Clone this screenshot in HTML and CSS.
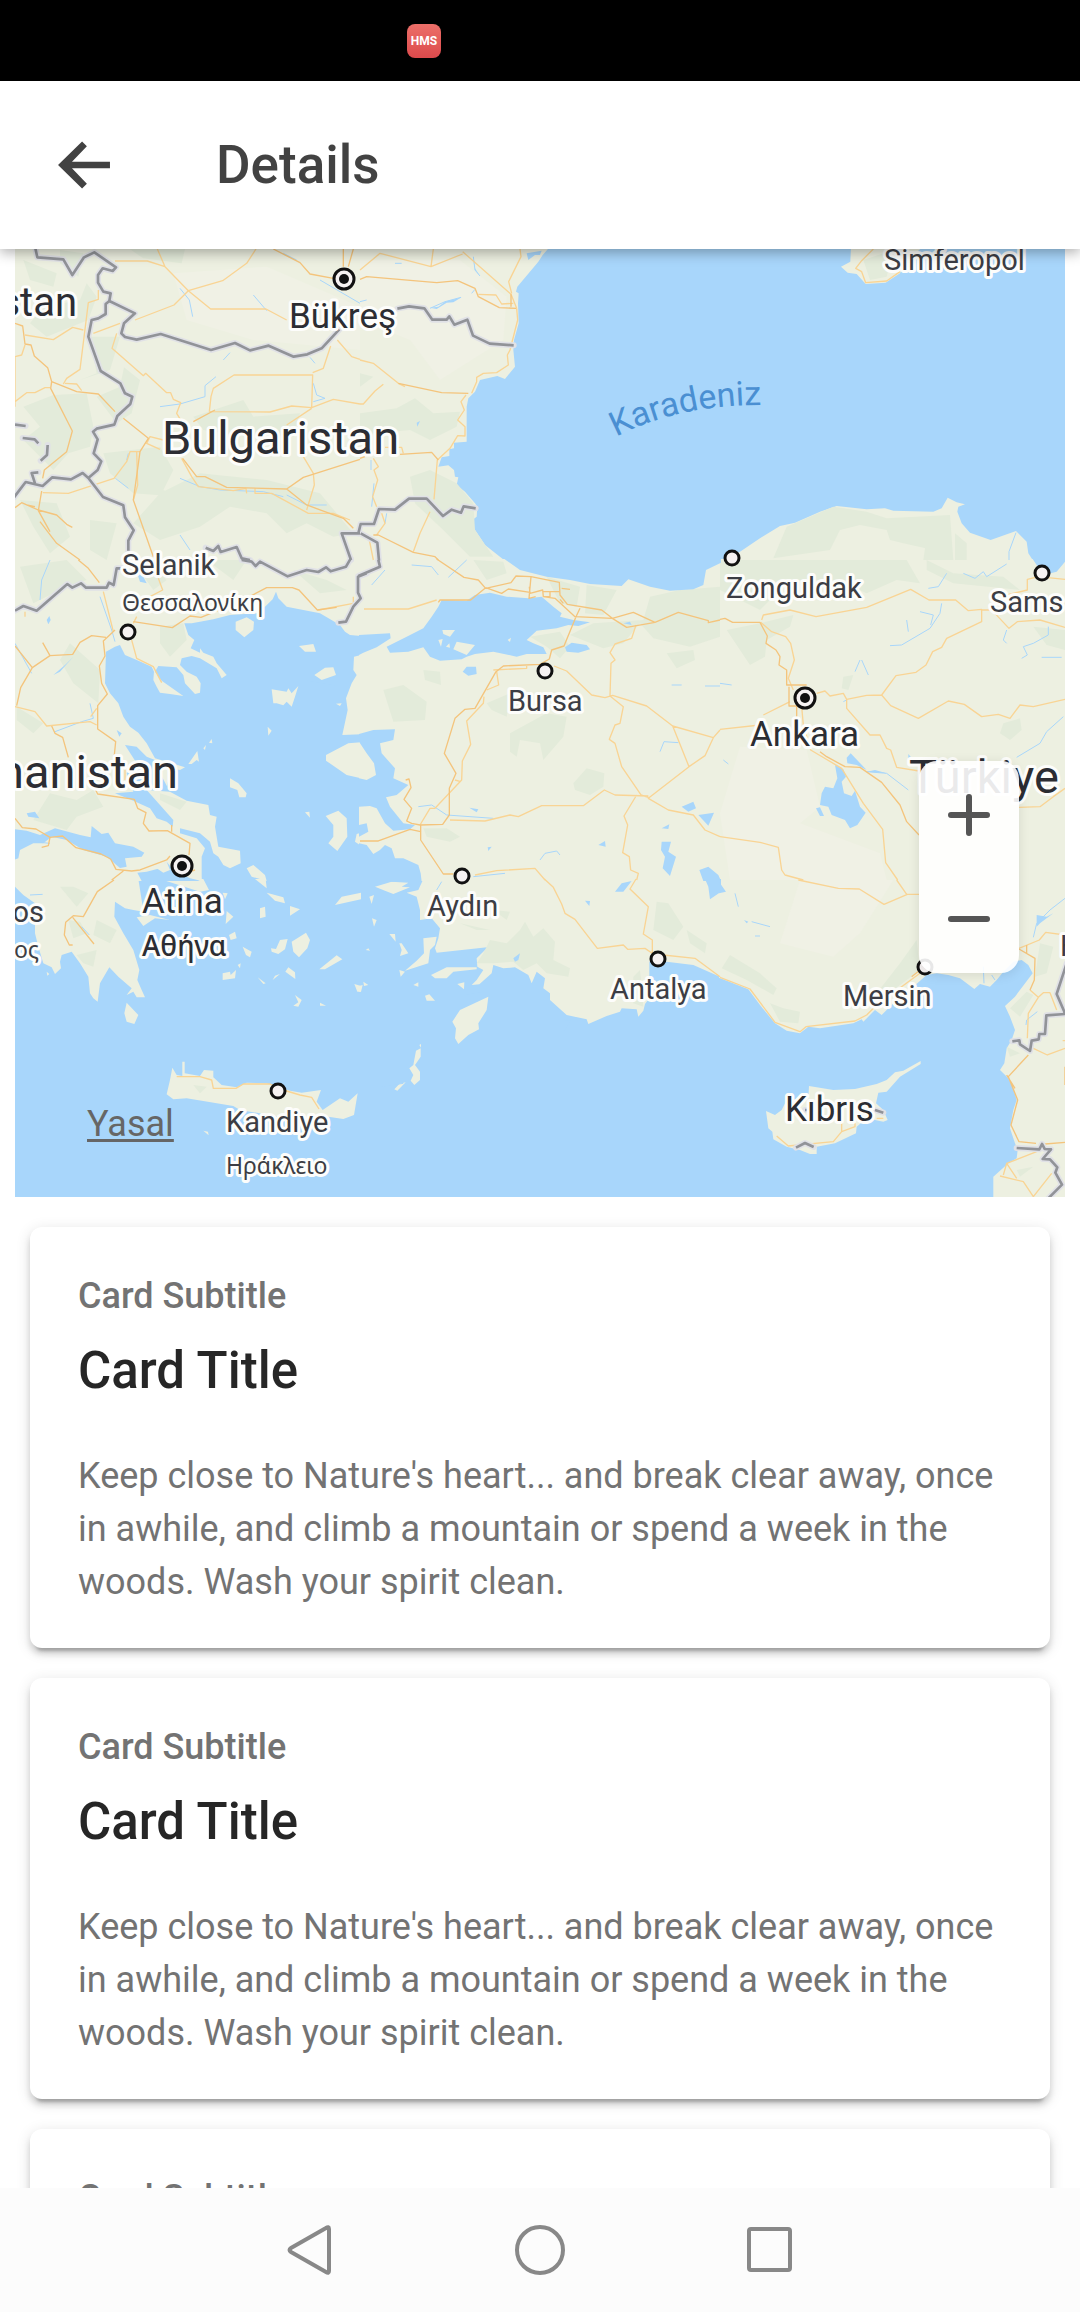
FILE: index.html
```html
<!DOCTYPE html>
<html lang="en">
<head>
<meta charset="utf-8">
<meta name="viewport" content="width=device-width, initial-scale=1">
<title>Details</title>
<link rel="stylesheet" href="styles.css">
</head>
<body>
<div class="screen">
  <div class="status-bar"><span class="status-app">HMS</span></div>

  <header class="toolbar">
    <button class="back-button" type="button" aria-label="Back">
      <svg class="back-icon" viewBox="0 0 54 52"><path d="M54 22.500H14.500L30 6.500 25 1.500 0 26 25 50.500 30 45.500 14.500 29.500H54Z" fill="currentColor"/></svg>
    </button>
    <h1 class="toolbar-title">Details</h1>
  </header>

  <main class="content">
    <section class="map" aria-label="Map">
      <svg class="map-canvas" viewBox="15 249 1050 948" preserveAspectRatio="xMidYMid slice">
        <defs>
          <g id="borders">
            <g transform="translate(0 240) scale(.33333)">
              <path d="M105 20L112 52 190 58 217 105 252 52 283 37 348 82 338 93 308 85 294 105V128L310 155 332 160 328 183 405 220 372 250 364 280 375 291 410 299 482 282 633 330 705 309 750 331 806 317 881 350 922 343 965 325 1018 268"/>
              <path d="M328 183L317 192V222L295 235 275 240 265 290 302 393 361 430 375 460 397 470 391 492 352 528 343 554 290 566 279 575 293 598 281 640 304 664 293 690 265 714 248 699 213 718 157 712 128 738 77 726 42 772M265 714L309 771 370 796 375 832 401 871 385 902V932M45 554L77 558M68 594L104 598 115 610M143 615L141 645 122 662M115 697L95 699 105 730M617 923L640 933 655 918 662 936 710 921 725 955 750 960M1080 880H1025L1053 960"/>
            </g>
            <g transform="translate(360 240) scale(.33333)">
              <path d="M112 206L147 199 193 205 217 239H260L268 229 283 254 322 239 339 287 389 311 461 316M-5 880L2 852H42L57 807 105 809 147 776H200L249 828 275 809 303 818 311 799 347 805M2 880L52 908 57 962"/>
            </g>
            <g transform="translate(0 560) scale(.33333)">
              <path d="M45 152L70 138 110 152 202 72 217 83 243 70 258 83H320L327 68 341 75 350 25H365M725 0L755 5 767 18 780 5 863 49 920 30 955 36 978 22 992 34 1038 20 1052 -4M1100 40L1074 50V98L1082 115 1060 140 1038 185 1015 188M1135 0L1140 20 1075 48"/>
            </g>
            <g transform="translate(720 880) scale(.33333)">
              <path d="M1040 250L1010 342 1036 402 979 406 975 462H958L956 478 935 482 930 513 900 493 898 481 877 484M890 804L958 808 966 792 974 807 993 808 968 837 990 838 1012 862 1006 878 1026 914 985 955M228 803L255 789 281 801M465 690L490 698M255 690L262 690"/>
            </g>
          </g>
          <path id="sea-name" d="M616 437Q680 404 765 405"/>
        </defs>

        <rect class="water" x="15" y="249" width="1050" height="948"/>

        <g class="land">
          <path transform="translate(0 240) scale(.33333)" d="M40 20H1083V963H40Z"/>
          <path transform="translate(360 240) scale(.33333)" d="M-3 20H570L548 45 535 65 472 140 468 155 476 160 474 190 476 250 462 300 460 330 465 380 435 417 412 408 360 420 345 455 325 475 320 500V605L282 608V625L268 628V648L245 652 235 680 265 676 282 690 285 710 295 712 290 735 315 755 345 790 352 800 350 830 337 840 342 865 375 915 435 962H-3Z"/>
          <path transform="translate(720 240) scale(.33333)" d="M393 20L391 65 363 80 383 98 410 102 437 132 497 128 540 100 560 60 610 20ZM-10 965L60 935 120 895 180 858 225 848 300 815 350 798 440 808 495 805 520 812 640 815 665 805 683 773 710 787 735 793 715 800 712 815 725 850 750 878 812 900 888 873 920 905 925 940 940 963Z"/>
          <path transform="translate(0 560) scale(.33333)" d="M40 -3H1083V228L1050 225 1035 215 1020 195 960 160 860 140 835 115 828 95 818 118 795 140 770 160 690 165 640 178 600 185 575 190 553 190 565 225 583 240 572 265 600 278V265L610 278 640 290 650 310 680 345 665 355 650 325 625 310 600 295 575 288 545 295 540 315 560 335 590 350 602 370 600 398 585 402 555 370 550 345 530 322 475 318 465 335 485 362 550 408 510 402 480 398 470 380 460 360 462 335 455 320 410 300 375 285 360 255 345 260 318 275 315 370 330 400 355 430 370 470 390 500 415 518 440 550 465 595 500 605 555 622 540 630 510 625 500 690 560 722 625 735 630 765 650 770 645 800 655 860 720 872 722 910 690 925 670 915 655 890 640 880 630 845 600 820 540 805V820L590 835 615 865 605 890V963H40ZM707 185L740 172 762 185 760 210 733 232 707 210ZM897 258L940 252 948 275 915 275ZM943 345L975 323 1000 322 1008 345 965 360ZM815 388L860 395 865 385 875 400 895 378 885 410 875 440 860 425 850 436 830 430 820 430ZM803 500L815 512 805 527ZM565 612L592 573 597 605 590 600 575 612ZM690 655L715 670 740 700 737 712 718 712 712 690 690 682ZM610 565L618 555 615 570ZM627 548L635 537 637 550ZM915 757L928 755 930 773ZM977 768L1015 752 1040 775 1042 830 1012 873 985 850 1000 830V795ZM740 925L760 915 795 945 800 963 755 950ZM1083 285L1062 290 1060 330 1070 345 1055 370 1038 415 1043 450 1027 525 1083 523ZM1083 547L1045 550 978 585V602L1040 645 1083 655ZM1083 818L1070 822 1065 845 1083 857ZM1008 431L1025 430 1020 438Z"/>
          <path transform="translate(360 560) scale(.33333)" d="M-3 -3H1083V963H-3Z"/>
          <path transform="translate(720 560) scale(.33333)" d="M-3 -3H1040V963H-3Z"/>
          <path transform="translate(0 880) scale(.33333)" d="M40 -3H415L425 60 430 95 400 90 375 85 345 65 343 110 370 160 400 210 418 270 412 300 425 330 435 352 410 352 400 335 380 345 395 325 355 290 328 262 300 310 293 365 280 355 270 340 265 290 240 250 215 215 185 225 180 245 183 265 165 282 155 262 130 250 115 200 105 160V70L70 45 45 20ZM480 -3H610L627 30 600 35ZM410 112L450 105 510 120 465 115 430 138ZM380 368L415 405 403 432 380 425 373 400ZM517 563L530 585 547 588V545H554V580L600 588 612 570 640 572 640 592 665 615 710 622 740 608 800 610 870 632 905 638 963 630 950 665 968 690 1020 655 1045 665 1073 640 1062 705 1030 717 985 710 850 712 720 690 700 678 560 655 520 658 500 643 510 600ZM765 -3H797L800 25ZM800 38L850 52 855 70 825 62ZM1005 75L1025 50 1083 38V58ZM780 85L795 80 797 110 780 115ZM870 78L900 88 870 107ZM668 38L683 40 675 58ZM680 93L700 110 677 132ZM687 165L705 155 710 175 692 180ZM728 200L755 215 750 232 738 225ZM813 205L828 207 840 180 863 177 855 208 835 222 815 215ZM875 185L918 158 930 180 922 205 897 232 880 215ZM958 268L1010 226 1027 238 975 268ZM668 280L690 275 692 285 708 270 705 295 668 300ZM713 255L722 250 720 265ZM773 292L797 310 790 312ZM818 300L825 287 840 282ZM856 275L865 262 885 277 886 297ZM885 345L905 360 895 380 880 377 895 367ZM960 368L978 377 960 377ZM1063 312L1083 318V335H1072ZM610 752L624 755 626 766ZM140 275L148 282 142 287Z"/>
          <path transform="translate(360 880) scale(.33333)" d="M190 -3L175 30 140 38 170 50 180 90V120L215 115 240 145 235 175 225 205 230 218 395 200 375 210 350 235 352 260 370 270 350 300 335 315 358 313 395 280 400 255 430 265 465 262 505 285 515 310 530 275 555 295 550 325 570 340V360L620 405 680 418 685 432 740 408 780 395 785 385 830 388 835 410 850 392 855 372 868 355V245L920 245 1000 255 1083 292V-3ZM45 20L95 5 145 8 125 20 150 22 100 42 75 32ZM28 50L42 45 35 72ZM36 115L50 120 42 140ZM88 162L105 162 107 185ZM118 190L125 190 145 220 120 228 125 210ZM190 175L230 170 225 195 210 210 205 250 135 272 170 242 192 220ZM213 285L260 262 350 262V268L280 275 260 295 225 295ZM118 270L135 275 122 290ZM160 315L175 307V320ZM292 312L313 307 312 328ZM195 347L208 343 225 362 200 362ZM277 425L300 390 385 350 380 390 355 430 357 448 325 465 295 492 285 475 288 445ZM168 512L182 505V530L165 555 180 575V600L163 615 152 602 160 585 148 565 160 555ZM103 628L118 612 137 607 112 632ZM178 495L183 492V503ZM-3 318L8 315 3 335H-3ZM10 305L25 315 12 318ZM17 210L25 205 30 212Z"/>
          <path transform="translate(720 880) scale(.33333)" d="M-3 -3H1040V955H820V890L865 850 890 835 893 810 885 790 870 745 880 690 890 660 880 625 865 595 840 570 853 550 860 505 875 480 885 450 870 410 855 378 885 350 938 280 925 255 905 240 880 245 850 275 830 300 810 320 780 312 763 327 720 295 685 285 650 280 620 285 580 320 520 370 485 405 465 390 430 425 425 418 400 430 300 445 265 440 240 460 200 452 165 430 120 375 85 328 -3 293ZM267 618L340 630 405 627 470 612 500 600 525 577 550 572 602 543V552L540 590 500 635 475 638 468 670 490 690 503 720 490 725 440 715 410 740 408 760 345 790 290 800 290 822H270L240 810 200 800 160 778 157 755 145 745 138 693 165 705 185 690 200 660 265 655Z"/>
        </g>

        <g class="farmland">
          <path transform="translate(0 240) scale(.33333)" d="M520 100L800 80 1080 200V330L760 300 560 240Z"/>
          <path transform="translate(360 240) scale(.33333)" d="M0 60L300 60 440 170 430 300 240 420 150 300 0 240Z"/>
          <path transform="translate(720 560) scale(.33333)" d="M60 560L260 570 300 740 240 790 480 880 500 960H30L0 760Z"/>
          <path transform="translate(720 880) scale(.33333)" d="M240 0H520L420 160 340 230 180 190Z"/>
        </g>

        <g class="wood">
          <path transform="translate(0 240) scale(.33333)" d="M180 30L250 40 235 110 180 70ZM390 28H555L545 70 430 55ZM70 60L170 100 160 140 90 120ZM260 130L290 170 265 240 140 290 90 250 130 200 240 180ZM270 290L360 290 330 390 240 420 290 400ZM372 382L420 420 395 520 350 550 290 470 360 440ZM160 465L260 460 280 560 270 620 205 640 160 690 70 600 120 560 70 500ZM310 640L480 620 520 690 490 750 540 770 400 760 330 700ZM580 530L730 480 760 530 900 520 880 590 740 590 610 570ZM600 700L800 720 960 760 1060 880 1000 890 920 850 860 880 800 820 690 800 600 860 480 900 400 850 480 760ZM60 780L170 790 210 890 150 940 100 860ZM270 840L350 850 320 960 270 930Z"/>
          <path transform="translate(360 240) scale(.33333)" d="M0 520L110 505 165 475 220 520 300 515 290 560 210 600 150 570 0 585ZM150 710L210 690 290 730 340 790 345 870 400 950H330L250 870 165 790ZM0 400L40 410 0 440Z"/>
          <path transform="translate(720 240) scale(.33333)" d="M200 860L340 800 440 815 500 835 690 825 700 960H610L620 890 660 870 640 930 550 910 510 900 500 870 420 855 360 870 330 930 160 955ZM430 60L520 30 500 110 450 120ZM705 880L740 910V960H705Z"/>
          <path transform="translate(0 560) scale(.33333)" d="M60 20L200 0 260 60 190 85 100 130ZM410 20L440 0 500 60 460 90ZM620 0H740L700 60ZM480 200L550 190 560 240 510 290 480 250ZM210 250L300 330 295 430 220 370 180 300ZM50 440L130 490 100 520 50 480ZM150 700L230 720 280 690 310 740 230 770 200 810 100 780ZM480 700L560 725 540 750 480 720ZM880 30L980 60 1040 90 960 100Z"/>
          <path transform="translate(360 560) scale(.33333)" d="M340 0L430 5 440 40 380 60ZM560 50L660 80 650 140 600 130ZM680 75L770 90 730 165 675 160ZM870 110L960 90 1080 80V230L990 260 880 235 840 190 790 250 730 265 630 225 700 190 850 180ZM510 230L600 215 630 260 600 295 560 260ZM920 280L1000 270 1005 300 950 325ZM190 330L240 335 243 375 195 360ZM70 390L130 375 200 425 195 480 100 485ZM380 430L450 400 440 470 395 450ZM450 520L560 460 620 470 610 530 550 600 540 550 480 540 470 590 450 575ZM640 670L680 625 733 640 730 680 690 705 645 690ZM190 805L260 805 300 830 270 845 200 830Z"/>
          <path transform="translate(720 560) scale(.33333)" d="M0 0H560L600 70 530 60 440 100 350 60 210 60 120 150 0 90ZM20 210L120 190 220 165 210 200 140 240 135 290 90 315ZM620 0L700 40 850 50 900 90 700 70 620 30ZM940 200L1035 210V270L980 255ZM850 490L900 475 905 510 870 540 840 520ZM370 350L400 345 385 390 365 385Z"/>
          <path transform="translate(0 880) scale(.33333)" d="M180 20L220 20 265 40 230 80ZM205 120L240 125 260 160 220 175ZM290 120L350 150 330 190 280 165ZM230 225L290 210 280 260 250 250ZM580 615L620 620 600 640Z"/>
          <path transform="translate(360 880) scale(.33333)" d="M400 90L450 95 440 120ZM300 130L390 150 350 150ZM350 250L370 220 390 180 440 190 480 150 495 125 520 170 550 145 585 185 580 240 630 265 625 290 560 280 530 250 490 270 460 245 400 250ZM890 65L925 70 970 140 940 180 880 150ZM820 290L840 270 850 380 820 370ZM980 150L1040 190 1035 220 990 190Z"/>
          <path transform="translate(720 880) scale(.33333)" d="M30 225L120 280 170 325 160 345 80 300 5 265ZM150 370L190 385 240 395 235 430 180 425ZM590 180L600 270 520 330 470 340 540 250ZM960 190L1000 200 980 280 945 290ZM870 385L920 335 940 345 900 410ZM860 500L900 520 870 530ZM890 870L940 860 900 890Z"/>
        </g>

        <g class="water">
          <path transform="translate(360 240) scale(.33333)" d="M500 40L545 32 540 45 525 45 505 60ZM340 60L345 85 360 108 345 90ZM210 203L235 200 255 185 305 172 280 187 260 188 230 207ZM170 548L180 543 172 560Z"/>
          <path transform="translate(0 560) scale(.33333)" d="M410 35L430 50 440 70 420 65ZM45 808L80 812 120 825 165 805 240 825 272 832 275 798 305 822 325 818 345 850 400 860 433 878 425 890 375 895 380 920 360 924 320 890 250 870 200 840 155 830 130 850 100 850 60 870 55 895 40 900V808ZM375 555L410 560 440 590 465 600 480 640 510 695 440 690 520 780 518 800 500 785 470 775 450 745 400 722 345 700 400 695 380 640 410 610ZM412 938L440 935 480 925 500 905 520 930 560 940 600 963H425ZM80 760L105 755 118 775 85 770ZM350 510L365 520 358 530ZM140 180L148 168 152 180 145 193ZM160 345L195 315 220 290 180 335Z"/>
          <path transform="translate(360 560) scale(.33333)" d="M430 -5L480 30 560 50 630 60 690 72 785 78 805 58 870 80 930 92 1000 88 1030 75 1038 30 1083 8V-5ZM235 140L245 120 320 122 345 105 390 98 440 110 505 115 545 110 580 140 605 160 600 170 640 180 690 187 655 198 625 195 590 205 530 212 500 240 520 250 550 262 560 282 500 282 470 290 400 275 345 282 320 290 305 298 240 302 210 290 190 262 145 275 90 278 80 260 140 230 190 205 215 170ZM-3 225L90 220 92 235 50 262 10 278-3 285ZM615 262L635 248 680 255 690 268 655 278 620 275ZM308 335L320 320 348 320 350 342 325 347ZM-3 522L40 510 105 508 100 540 60 550 65 580 105 625 100 655 145 675 110 705 78 712 90 740 130 790 165 795 150 808 100 812 75 790 50 745 30 738-3 740V655L20 660 48 645 42 610 20 580-3 545ZM-3 850L20 855 40 882 60 870 75 855 95 865 105 895 130 895 175 915 182 940 185 965H-3ZM965 740L1000 725 1008 745 985 755ZM1015 765L1062 758 1045 797ZM905 845L933 845 925 875 948 890 930 948 908 925 915 890 903 870ZM1018 930L1045 920 1075 945 1083 963H1030ZM715 855L735 843 737 860ZM328 743L355 748 350 757ZM383 862L395 860 385 873ZM905 805L928 793 925 807ZM790 190L810 185 815 195ZM-3 795L20 790 25 815-3 830Z"/>
          <path transform="translate(720 560) scale(.33333)" d="M938 -3H1035V5L1010 35 970 45 950 15ZM345 615L370 628 378 650 365 665 372 700 395 708 405 692 420 740 437 758 412 795 390 805 375 780 335 765 325 740 300 735 305 700 315 680 340 685 352 655ZM380 593L392 580 440 630 410 615 382 610ZM288 745L300 742 312 768 300 768ZM565 582L580 600 565 600ZM500 640L465 630 440 635Z"/>
          <path transform="translate(360 880) scale(.33333)" d="M765 35L785 10 815 3 790 35ZM1035 -3H1083V35L1050 58 1045 20ZM675 62L690 63 688 78ZM460 235L480 220 475 240 465 245Z"/>
          <path transform="translate(720 880) scale(.33333)" d="M-3 5L18 35-3 40ZM950 105L980 110 1000 100 960 130 950 140ZM72 120L85 125 80 130Z"/>
        </g>
        <g class="land">
          <path transform="translate(360 560) scale(.33333)" d="M247 210L285 210 270 230 250 222ZM290 245L345 255 320 285 280 268ZM235 240L248 237 243 260ZM258 260L268 250 270 263ZM443 240L453 233 450 246Z"/>
          <path transform="translate(0 560) scale(.33333)" d="M470 925L500 905 510 930 490 938ZM530 935L545 950 600 925 605 963 570 955Z"/>
        </g>

        <g class="river">
          <path transform="translate(0 240) scale(.33333)" d="M648 410L615 437V470L540 492 480 500M540 145L568 180 578 230M760 165L800 212M670 360L690 338M940 430L950 465 975 475 940 485M540 885L570 930M540 715L600 740 660 750 790 755 850 770M860 765L920 795 980 795M850 40L890 60M960 120L1080 190M346 715L385 745M930 352L945 370M380 660L385 640"/>
          <path transform="translate(360 240) scale(.33333)" d="M340 50L345 90 360 108M210 205L255 185 303 172M33 660V690M42 730L35 800M0 185L20 180M80 820L75 850M105 70H125M335 160L345 148"/>
          <path transform="translate(720 240) scale(.33333)" d="M888 878L867 935V960"/>
          <path transform="translate(0 560) scale(.33333)" d="M300 110L335 210 345 245M270 430L280 475 245 485 165 515M150 0L125 60 120 120M45 250L95 340M920 362L1005 376M45 840L150 850"/>
          <path transform="translate(360 560) scale(.33333)" d="M155 15L215 20 235 45M75 30L35 75M320 0L265 52M540 900L555 880 590 873 600 885M900 575L912 545 955 548M340 950L435 940M935 375H965M1035 378H1080M175 740L215 735 260 765 330 770 400 775"/>
          <path transform="translate(720 560) scale(.33333)" d="M625 85L655 80 680 40M730 40L765 55 790 35 800 50 860 12M510 257L545 255 630 205 660 160 665 130M560 180L565 215M600 155L640 165 632 195M420 300L405 335M425 300L445 345M860 210L850 240 860 250M985 200V225L940 250 910 260 922 285 905 295M965 292H1025M1030 470L980 515 960 550 890 592M440 635L500 640 565 690M0 370L35 375M10 600L25 612M370 425L380 420"/>
          <path transform="translate(720 880) scale(.33333)" d="M940 172L950 130 990 90 1035 55M45 40L55 80M95 125L150 140M105 168H120M790 260L792 310M815 285L825 300M918 435L920 420 952 395"/>
          <path transform="translate(360 880) scale(.33333)" d="M230 30L245 5M610 458L633 420 615 420M55 622L130 610M315 345L370 335"/>
          <path transform="translate(0 880) scale(.33333)" d="M245 140L268 165M90 45L128 43"/>
        </g>

        <g class="road">
          <path transform="translate(0 240) scale(.33333)" d="M472 27L495 80 565 152 668 122 740 70 768 27M495 80L442 63H345M565 152L522 195 405 240M565 152L632 207H798L860 240M75 285L160 299 218 262 250 270M295 150V178L265 188 240 388 200 415 190 432M360 250L280 280M350 280L336 325 430 407 437 400 500 458H512L520 478 542 488 530 520 545 545M628 515L633 470 640 445 702 405H938L935 503M628 515L810 516 875 498 935 503 1000 478 1080 492M938 398L970 385 992 318M1012 300L1055 350 1080 358M935 505L860 555M490 600L450 590 440 610 480 628M45 485L80 458H105L135 443 150 443M45 500V350L65 345 75 315M420 635H390L380 665 342 715 205 760 128 758M545 655L575 710 595 740 700 752 738 745 740 760M765 745V760H815L925 820H1000L1050 840M910 650L940 700 943 735 920 810M1000 280L1030 250M195 430L230 432 245 452M410 635L413 735 400 780"/>
          <path transform="translate(360 240) scale(.33333)" d="M0 90L60 40 213 80 308 42M213 80L220 27M308 35L453 163 470 205M480 27L483 50 446 125 455 160M355 163L408 165 425 192 460 190M470 205L473 240 450 330 442 345 445 375 410 398 370 400 350 412V425L335 460M0 360L40 370 115 430 135 440M0 492H10L45 453 70 433M318 465L303 485 313 510 293 540 315 560V588L293 587 270 625 232 660 222 778M40 655L55 680 42 690 53 720 38 770 50 800M65 820L75 850 50 885M210 815L180 880 160 935M25 885L40 960M75 622H125L130 640"/>
          <path transform="translate(720 240) scale(.33333)" d="M460 27L425 62 407 85 425 95 437 128 500 123 540 95"/>
          <path transform="translate(0 560) scale(.33333)" d="M475 55L488 90 450 110M75 155V170M45 440L105 455 140 498 270 485 290 495M272 470L290 445M310 95L340 215M395 240L410 295 460 320 485 368M410 170L400 190M375 630V660M1060 110V130L955 150"/>
          <path transform="translate(360 560) scale(.33333)" d="M12 147H145L230 120M828 195L815 235 765 252 750 278 765 300 753 310 750 408 790 440 780 490 765 495 748 538 765 550 785 620 843 705 865 712M582 318L620 333 695 405 735 413 758 406 860 438 938 498 1060 533 1080 510M938 498L987 620 865 715 925 750 1000 765 1035 810 1080 830M987 620L1035 587 1060 533M865 708L765 705 733 690 670 737H545L475 770 450 765 375 783 270 780M830 705L792 768 803 795 788 878 808 890 812 930 835 940 830 960M410 335L416 375 380 390M372 410L370 430 320 483 332 553 307 603 305 660 225 745H210L180 795M345 945L410 932 525 925 555 960M285 660L302 665M400 330L500 325V318"/>
          <path transform="translate(720 560) scale(.33333)" d="M125 180L130 165 210 150 288 170 440 142 572 88 627 120H707L745 152 785 148V185L680 235 665 262 638 275 618 315 588 337 528 347 485 405 440 406 380 418V445L450 525H480L500 565 512 570 530 622 597 633M485 405L512 437 595 475 685 423 733 433 785 470 835 463 870 475 900 435 940 440 1035 418M380 418L370 400 330 408 315 393 290 400M122 187L155 215 197 230 212 250 223 300 205 355 220 390M820 155L867 205 892 185 960 180 1035 202M785 150H820M1035 58L955 50 922 58V90L860 105M210 425L130 465M120 495L0 508M245 440L250 495 272 570 365 625 430 730 488 808 497 908 533 960M0 830L120 847 175 862 185 930 195 945 250 960M897 742L960 740 1000 710 1035 685"/>
          <path transform="translate(360 880) scale(.33333)" d="M553 -3L580 22 605 72 615 100 645 118 712 205 790 195 803 208 855 205 880 222M828 -3L810 27 865 80 850 162 877 180V220M910 225L1005 235 1080 290"/>
          <path transform="translate(720 880) scale(.33333)" d="M235 0L355 25 418 27 492 73 562 43H597M530 0L560 43M0 292L90 327 165 427 240 455 258 440 405 423 440 405 470 375 600 280M897 205L958 180 977 157 1035 165M930 330L955 352 925 400 922 475M955 352L970 338H990L1010 390M1035 505L982 525 940 505M860 850L890 895M850 885L860 850 950 815M840 888L910 905 940 950 995 880M170 768L205 798 340 785 365 755 405 740V730M365 755V730M470 715H490M1035 482H1028"/>
          <path transform="translate(0 880) scale(.33333)" d="M530 590H600L635 600 640 625H708L730 612H810L850 630 900 645 935 652 957 687"/>
        </g>

        <g class="trunk">
          <path transform="translate(0 240) scale(.33333)" d="M820 27L900 68 930 102 1000 115M1030 27V80M1060 27L1045 80M45 250L68 258 75 312 93 315 103 348 143 383 155 425 230 455 295 462 345 515M155 425L152 445 217 573 200 635 133 690 128 715M370 535L445 595 420 635 400 780 460 950M548 655L590 710H615L680 742 860 747 910 712 1080 658M860 747L920 795 1030 835 1060 865M45 803L65 788 115 810 170 825 200 853 217 862M125 753L115 812 150 875M120 845L170 910 240 960M580 545L645 510M80 795L105 800"/>
          <path transform="translate(360 240) scale(.33333)" d="M0 118L20 110 230 128 293 122 345 145 355 170 418 203 468 205M453 163V200M115 430L245 458 325 460M120 643L215 637 235 660M0 655L15 650M40 885H55L160 937 225 950 235 960"/>
          <path transform="translate(0 560) scale(.33333)" d="M235 0L265 25 298 68M345 210L310 243 315 288 298 318 305 370 322 402 293 437V507L347 545 343 585M318 232L275 227 240 247 218 283 150 287 97 323 62 383 50 437M150 287L128 248M97 323L45 258M155 498L165 520 188 532 205 592M400 185L517 203 570 168 603 172 720 125 800 83H877L897 90 952 150 1010 142M287 690L293 702 403 718 413 745 438 758 430 790 447 813 502 812 570 850 567 885M515 795V815M45 775L67 803 108 807 150 832 188 828 228 863 303 882 332 897 348 928 395 933 420 930 500 900 510 888M370 933L335 960M150 832L145 857 125 862M550 940L585 930"/>
          <path transform="translate(360 560) scale(.33333)" d="M230 -3L312 52 355 60 377 85 453 68 468 48 513 50 598 67 600 105 622 133 725 150 757 175 800 202 885 187 820 157 757 175 645 170 585 115 550 110 548 90 510 100 508 80M513 50L507 115 527 110M377 83L332 120H240L235 127M377 83L425 100 445 87 510 97M605 85L630 88M550 95H600M660 145L648 170 612 258 575 270 568 297 540 313 430 318 408 335 345 445 315 448 285 475 253 580 288 640 268 685V765L248 793 180 795 155 790 140 783 155 745 132 718 153 683 147 657 137 660M885 187L955 157 1045 182V188L1080 180M0 843H55L150 808 182 815M182 795V840L250 942H280M550 110H570V95M600 118L610 130"/>
          <path transform="translate(720 560) scale(.33333)" d="M0 178L15 175 38 187H120L142 228 138 250 168 270 180 290 177 315 200 330V375L260 375M207 380V438H230V470M300 575L320 590 375 620 420 622 485 667 540 735 560 785 597 825"/>
          <path transform="translate(0 880) scale(.33333)" d="M342 0L292 35 250 110 220 107 197 127 193 165 208 195H218M218 112L282 192"/>
          <path transform="translate(720 880) scale(.33333)" d="M897 207L945 235 943 300 930 330M920 195V222M925 525L865 590 893 660 873 735 897 785 948 790M975 792L1035 787M1035 560V615M860 585L885 625M575 290L600 270"/>
        </g>

        <use href="#borders" class="border-halo"/>
        <use href="#borders" class="border-line"/>

        <g class="town-marker">
          <circle cx="128" cy="632" r="7"/><circle cx="545" cy="671" r="7"/><circle cx="732" cy="558" r="7"/>
          <circle cx="1042" cy="573" r="7"/><circle cx="462" cy="876" r="7"/><circle cx="658" cy="959" r="7"/>
          <circle cx="925" cy="967" r="7"/><circle cx="278" cy="1091" r="7"/>
          <circle cx="344" cy="279" r="10"/><circle cx="805" cy="698" r="10"/><circle cx="182" cy="866" r="10"/>
        </g>
        <g class="capital-dot"><circle cx="344" cy="279" r="5"/><circle cx="805" cy="698" r="5"/><circle cx="182" cy="866" r="5"/></g>

        <g class="label label-country">
          <text x="162" y="454">Bulgaristan</text>
          <text x="178" y="788" text-anchor="end">Yunanistan</text>
          <text x="909" y="793">Türkiye</text>
        </g>
        <g class="label label-region">
          <text x="77" y="316" text-anchor="end">Sırbistan</text>
        </g>
        <g class="label label-capital">
          <text x="289" y="328">Bükreş</text>
          <text x="750" y="746">Ankara</text>
          <text x="142" y="913">Atina</text>
          <text x="785" y="1121">Kıbrıs</text>
        </g>
        <g class="label label-city">
          <text x="884" y="270">Simferopol</text>
          <text x="122" y="575">Selanik</text>
          <text x="726" y="598">Zonguldak</text>
          <text x="990" y="612">Sams</text>
          <text x="508" y="711">Bursa</text>
          <text x="427" y="916">Aydın</text>
          <text x="610" y="999">Antalya</text>
          <text x="843" y="1006">Mersin</text>
          <text x="226" y="1132">Kandiye</text>
          <text x="44" y="922" text-anchor="end">os</text>
          <text x="1060" y="956">H</text>
        </g>
        <g class="label label-greek">
          <text x="122" y="611">Θεσσαλονίκη</text>
          <text x="226" y="1174">Ηράκλειο</text>
          <text x="39" y="958" text-anchor="end">ος</text>
        </g>
        <g class="label label-greek-capital"><text x="142" y="956">Αθήνα</text></g>
        <text class="label-sea"><textPath href="#sea-name">Karadeniz</textPath></text>
      </svg>
      <a class="map-legal" href="#legal">Yasal</a>
      <div class="map-zoom">
        <button class="zoom-button" type="button" aria-label="Zoom in"><svg class="zoom-icon" viewBox="0 0 42 42"><path d="M3 21H39M21 3V39"/></svg></button>
        <button class="zoom-button" type="button" aria-label="Zoom out"><svg class="zoom-icon" viewBox="0 0 42 42"><path d="M3 21H39"/></svg></button>
      </div>
    </section>

    <div class="cards">
      <article class="card">
        <p class="card-subtitle">Card Subtitle</p>
        <h2 class="card-title">Card Title</h2>
        <p class="card-text">Keep close to Nature's heart... and break clear away, once in awhile, and climb a mountain or spend a week in the woods. Wash your spirit clean.</p>
      </article>
      <article class="card">
        <p class="card-subtitle">Card Subtitle</p>
        <h2 class="card-title">Card Title</h2>
        <p class="card-text">Keep close to Nature's heart... and break clear away, once in awhile, and climb a mountain or spend a week in the woods. Wash your spirit clean.</p>
      </article>
      <article class="card">
        <p class="card-subtitle">Card Subtitle</p>
        <h2 class="card-title">Card Title</h2>
        <p class="card-text">Keep close to Nature's heart... and break clear away, once in awhile, and climb a mountain or spend a week in the woods. Wash your spirit clean.</p>
      </article>
    </div>
  </main>

  <nav class="system-nav" aria-label="System">
    <button class="nav-button" type="button" aria-label="Back"><svg class="nav-icon" viewBox="0 0 52 52"><path d="M45 5V47Q45 50 42 48L7 28Q4 26 7 24L42 4Q45 2 45 5Z"/></svg></button>
    <button class="nav-button" type="button" aria-label="Home"><svg class="nav-icon" viewBox="0 0 52 52"><circle cx="26" cy="26" r="23"/></svg></button>
    <button class="nav-button" type="button" aria-label="Recent apps"><svg class="nav-icon" viewBox="0 0 52 52"><rect x="5" y="5" width="41" height="41" rx="2"/></svg></button>
  </nav>
</div>
</body>
</html>
```
FILE: styles.css
```css
* {
  box-sizing: border-box;
}

body,
h1,
h2,
p {
  margin: 0;
}

body {
  font-family: Roboto, "Noto Sans", sans-serif;
  background: #fff;
}

button {
  border: 0;
  padding: 0;
  background: none;
  display: flex;
  align-items: center;
  justify-content: center;
}

.screen {
  height: 100vh;
  display: flex;
  flex-direction: column;
}

/* Status bar */
.status-bar {
  flex: none;
  height: 81px;
  padding: 24px 407px;
  background: #000;
}

.status-app {
  display: block;
  width: 34px;
  border-radius: 8px;
  background: linear-gradient(#ec6f69, #dc4a4c);
  color: #fff;
  font-size: 12px;
  font-weight: 700;
  line-height: 34px;
  text-align: center;
}

/* Toolbar */
.toolbar {
  flex: none;
  height: 168px;
  padding: 0 48px;
  display: flex;
  align-items: center;
  gap: 96px;
  position: relative;
  z-index: 1;
  background: #fff;
  color: #424242;
  box-shadow: 0 4px 12px rgba(0, 0, 0, .3);
}

.back-button {
  width: 72px;
  height: 72px;
  color: inherit;
}

.back-icon {
  width: 52px;
  height: 50px;
}

.toolbar-title {
  font-size: 53px;
  line-height: 62px;
  font-weight: 500;
}

/* Scrolling content */
.content {
  flex: 1;
  min-height: 0;
  overflow-y: auto;
  scrollbar-width: none;
}

.map {
  position: relative;
  margin: 0 15px;
  aspect-ratio: 1050 / 948;
  overflow: hidden;
}

.map-canvas {
  display: block;
  width: 100%;
  height: 100%;
}

.water { fill: #a8d6fb; }
.land { fill: #edf0e1; }
.farmland { fill: #f0f1e5; }
.wood { fill: #e3ebda; }

.river,
.road,
.trunk,
.border-halo,
.border-line {
  fill: none;
  stroke-linejoin: round;
}

.river { stroke: #a8d6fb; stroke-width: 3; }
.road { stroke: #f9d494; stroke-width: 4; }
.trunk { stroke: #f4c47c; stroke-width: 4; }
.border-halo { stroke: #e0e1e6; stroke-width: 18; stroke-linecap: round; }
.border-line { stroke: #919398; stroke-width: 8; }

.town-marker {
  fill: #f6f2f2;
  stroke: #111;
  stroke-width: 3;
}

.capital-dot { fill: #111; }

.label {
  fill: #2c2d33;
  stroke: #fdfdfb;
  stroke-width: 6;
  stroke-linejoin: round;
  paint-order: stroke;
}

.label-country { font-size: 47px; }
.label-region { font-size: 40px; }
.label-capital { font-size: 35px; }
.label-city { font-size: 29px; fill: #3c3d44; }
.label-greek { font-family: "Noto Sans", sans-serif; font-size: 23px; fill: #3c3d44; }
.label-greek-capital { font-family: "Noto Sans", sans-serif; font-size: 28px; font-weight: 500; }
.label-sea { font-size: 34px; fill: #4a8fd2; }

.map-legal {
  position: absolute;
  left: 72px;
  bottom: 52px;
  color: #666;
  font-size: 36px;
  line-height: 42px;
  text-decoration-thickness: 3px;
  text-underline-offset: 3px;
}

.map-zoom {
  position: absolute;
  right: 46px;
  bottom: 224px;
  width: 100px;
  padding: 2px 0;
  border-radius: 18px;
  background: rgba(255, 255, 255, .9);
  box-shadow: 0 2px 12px rgba(0, 0, 0, .1);
}

.zoom-button {
  width: 100%;
  height: 104px;
}

.zoom-icon {
  width: 42px;
  height: 42px;
  stroke: #555;
  stroke-width: 6;
  stroke-linecap: round;
}

/* Cards */
.cards {
  display: flex;
  flex-direction: column;
  gap: 30px;
  padding: 30px;
}

.card {
  padding: 48px 48px 39px;
  border-radius: 12px;
  background: #fff;
  box-shadow:
    0 9px 3px -6px rgba(0, 0, 0, .2),
    0 6px 6px rgba(0, 0, 0, .14),
    0 3px 15px rgba(0, 0, 0, .12);
}

.card-subtitle {
  margin-bottom: 22px;
  color: #737373;
  font-size: 36px;
  font-weight: 500;
  line-height: 43px;
}

.card-title {
  margin-bottom: 48px;
  color: #262626;
  font-size: 51px;
  font-weight: 500;
  line-height: 62px;
}

.card-text {
  color: #737373;
  font-size: 36px;
  line-height: 53px;
}

/* System navigation */
.system-nav {
  flex: none;
  height: 124px;
  display: flex;
  justify-content: center;
  background: #fcfcfc;
}

.nav-button {
  width: 230px;
}

.nav-icon {
  width: 52px;
  height: 52px;
  fill: none;
  stroke: #888;
  stroke-width: 4;
}
```
